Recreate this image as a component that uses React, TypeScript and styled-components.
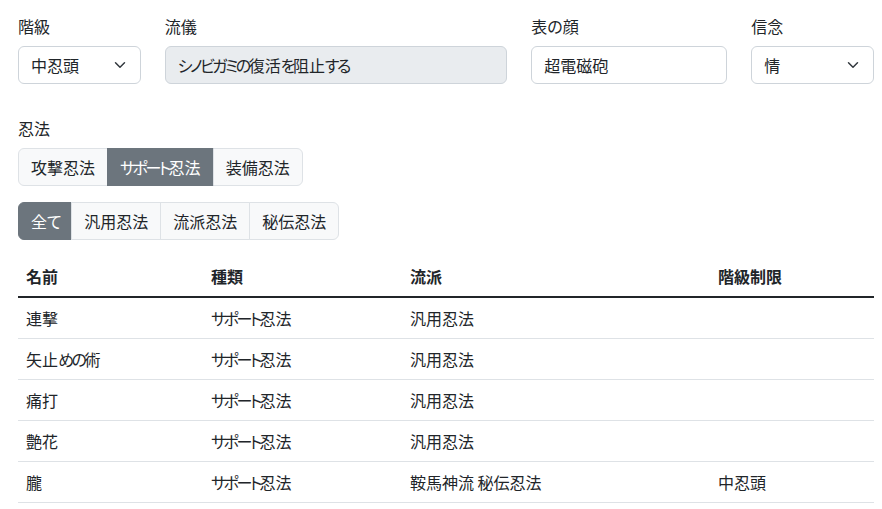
import React, { useState } from "react";
import styled, { createGlobalStyle } from "styled-components";

const GlobalStyle = createGlobalStyle`
  body {
    margin: 0;
    background: #fff;
    color: #212529;
    font-family: "Noto Sans CJK JP", "Noto Sans", sans-serif;
    font-size: 16px;
    line-height: 1.5;
    font-feature-settings: "palt";
  }
  * { box-sizing: border-box; }
`;

interface Ninpo {
  name: string;
  kind: string;
  school: string;
  rank: string;
}

const ninpoList: Ninpo[] = [
  { name: "連撃", kind: "サポート忍法", school: "汎用忍法", rank: "" },
  { name: "矢止めの術", kind: "サポート忍法", school: "汎用忍法", rank: "" },
  { name: "痛打", kind: "サポート忍法", school: "汎用忍法", rank: "" },
  { name: "艶花", kind: "サポート忍法", school: "汎用忍法", rank: "" },
  { name: "朧", kind: "サポート忍法", school: "鞍馬神流 秘伝忍法", rank: "中忍頭" },
];

// かなは参照のフォントより幅広なので詰める
const Kana = styled.span`
  letter-spacing: -2.5px;
`;

const jp = (text: string) =>
  text.split(/([\u3040-\u30ff]+)/).map((part, i) =>
    /[\u3040-\u30ff]/.test(part) ? <Kana key={i}>{part}</Kana> : part
  );

const Page = styled.div`
  padding: 14px 8px 0 18px;
`;

const Row = styled.div`
  display: flex;
  gap: 24px;
`;

const Col = styled.div<{ $span: number }>`
  flex: 0 0 calc((100% + 24px) * ${(p) => p.$span} / 12 - 24px);
  min-width: 0;
`;

const Label = styled.label`
  display: block;
  margin-bottom: 8px;
`;

const Input = styled.div<{ $disabled?: boolean }>`
  height: 38px;
  padding: 6px 12px;
  border: 1px solid #ced4da;
  border-radius: 6px;
  background: ${(p) => (p.$disabled ? "#e9ecef" : "#fff")};
  white-space: nowrap;
  overflow: hidden;
`;

const Select = styled(Input)`
  display: flex;
  align-items: center;
  justify-content: space-between;
  padding-right: 12px;
`;

const Chevron = () => (
  <svg width="16" height="12" viewBox="0 0 16 16" aria-hidden>
    <path
      d="m2 5 6 6 6-6"
      fill="none"
      stroke="#343a40"
      strokeWidth="2"
      strokeLinecap="round"
      strokeLinejoin="round"
    />
  </svg>
);

const Section = styled.div`
  margin-top: 32px;
`;

const ButtonGroup = styled.div`
  display: inline-flex;
  margin-bottom: 16px;
`;

const GroupButton = styled.button<{ $active?: boolean }>`
  font: inherit;
  height: 38px;
  padding: 6px 12px;
  border: 1px solid ${(p) => (p.$active ? "#6c757d" : "#dee2e6")};
  background: ${(p) => (p.$active ? "#6c757d" : "#f8f9fa")};
  color: ${(p) => (p.$active ? "#fff" : "#212529")};
  cursor: pointer;
  margin-left: -1px;

  &:first-child {
    margin-left: 0;
    border-radius: 6px 0 0 6px;
  }
  &:last-child {
    border-radius: 0 6px 6px 0;
  }
`;

const ButtonLine = styled.div`
  line-height: 0;
`;

const Table = styled.table`
  width: 100%;
  border-collapse: collapse;
`;

const Th = styled.th<{ $width: number }>`
  width: ${(p) => p.$width}px;
  padding: 8px;
  text-align: left;
  font-weight: 700;
  border-bottom: 2px solid #212529;
`;

const Td = styled.td`
  padding: 8px;
  border-bottom: 1px solid #dee2e6;
`;

const App: React.FC = () => {
  const [kind, setKind] = useState("サポート忍法");
  const [school, setSchool] = useState("全て");

  return (
    <Page>
      <GlobalStyle />
      <Row>
        <Col $span={2}>
          <Label>階級</Label>
          <Select>
            <span>中忍頭</span>
            <Chevron />
          </Select>
        </Col>
        <Col $span={5}>
          <Label>流儀</Label>
          <Input $disabled>{jp("シノビガミの復活を阻止する")}</Input>
        </Col>
        <Col $span={3}>
          <Label>表の顔</Label>
          <Input>超電磁砲</Input>
        </Col>
        <Col $span={2}>
          <Label>信念</Label>
          <Select>
            <span>情</span>
            <Chevron />
          </Select>
        </Col>
      </Row>

      <Section>
        <Label>忍法</Label>
        <ButtonLine>
          <ButtonGroup>
            {["攻撃忍法", "サポート忍法", "装備忍法"].map((k) => (
              <GroupButton key={k} $active={kind === k} onClick={() => setKind(k)}>
                {jp(k)}
              </GroupButton>
            ))}
          </ButtonGroup>
        </ButtonLine>
        <ButtonLine>
          <ButtonGroup>
            {["全て", "汎用忍法", "流派忍法", "秘伝忍法"].map((s) => (
              <GroupButton key={s} $active={school === s} onClick={() => setSchool(s)}>
                {jp(s)}
              </GroupButton>
            ))}
          </ButtonGroup>
        </ButtonLine>
      </Section>

      <Table>
        <thead>
          <tr>
            <Th $width={185}>名前</Th>
            <Th $width={199}>種類</Th>
            <Th $width={308}>流派</Th>
            <Th $width={164}>階級制限</Th>
          </tr>
        </thead>
        <tbody>
          {ninpoList.map((n) => (
            <tr key={n.name}>
              <Td>{jp(n.name)}</Td>
              <Td>{jp(n.kind)}</Td>
              <Td>{n.school}</Td>
              <Td>{n.rank}</Td>
            </tr>
          ))}
        </tbody>
      </Table>
    </Page>
  );
};

export default App;
